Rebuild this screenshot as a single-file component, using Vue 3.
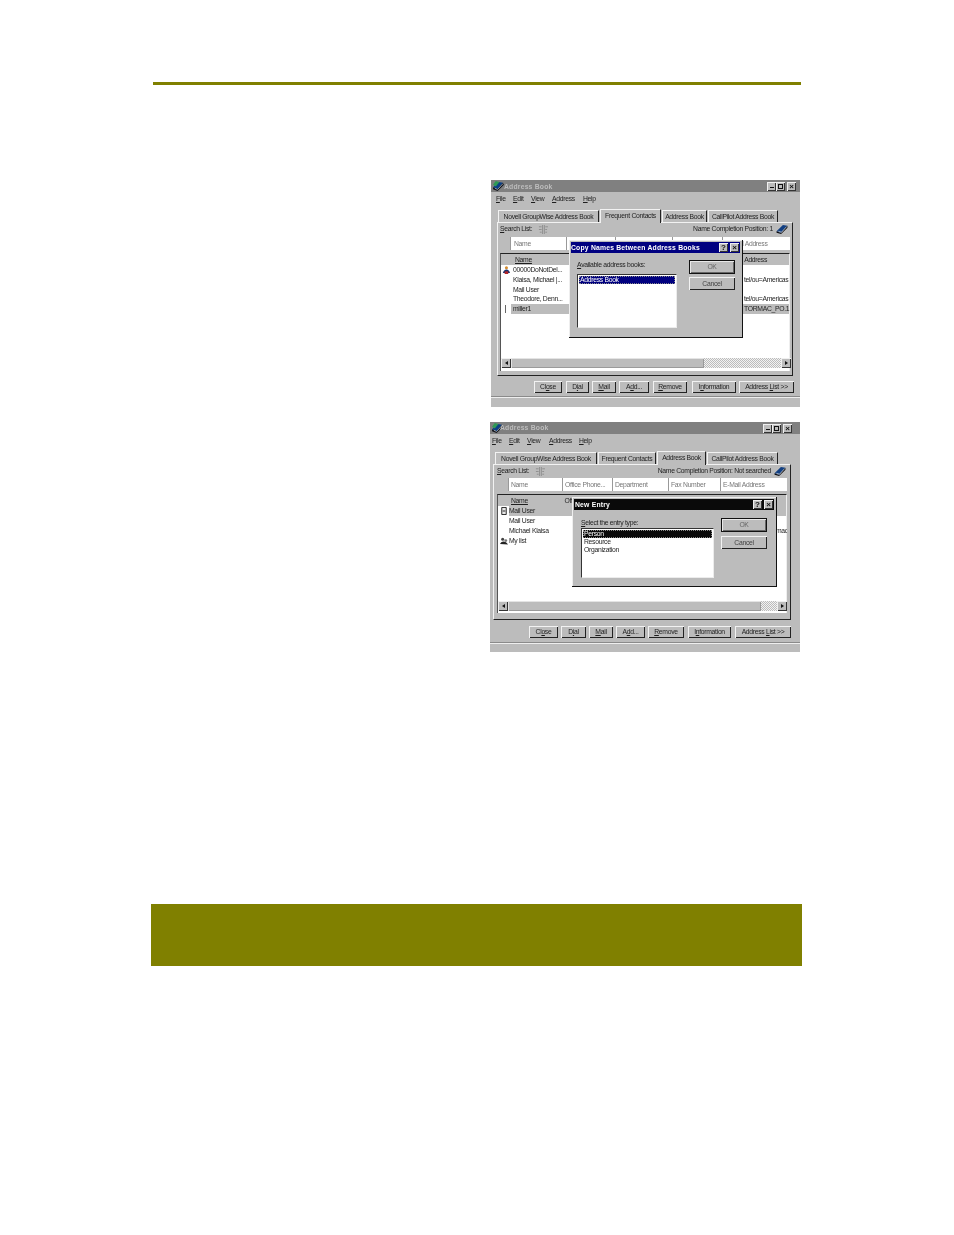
<script setup>
const menuBase = [
  ['', 'F', 'ile'],
  ['', 'E', 'dit'],
  ['', 'V', 'iew'],
  ['', 'A', 'ddress'],
  ['', 'H', 'elp']
]

const windows = [
  {
    id: 'first',
    titleInset: 11,
    menu: menuBase,
    menuSlots: [17, 18, 21, 31, 20],
    tabs: [
      { label: 'Novell GroupWise Address Book', width: 101 },
      { label: 'Frequent Contacts', width: 61, active: true },
      { label: 'Address Book', width: 45 },
      { label: 'CallPilot Address Book', width: 70 }
    ],
    search: 'Name Completion Position:  1',
    columns: [
      { label: 'Name', width: 56 },
      { label: 'Office Phone...', width: 49 },
      { label: 'Department', width: 57 },
      { label: 'Fax Number', width: 50 },
      { label: 'E-Mail Address', width: 68 }
    ],
    rows: [
      { name: '00000DoNotDel...', icon: 'person', right: '' },
      { name: 'Klaisa, Michael |...', right: 'tel/ou=Americas' },
      { name: 'Mail User', right: '' },
      { name: 'Theodore, Denn...', right: 'tel/ou=Americas' },
      { name: 'miller1', selected: true, right: 'TORMAC_PO.1', mark: true }
    ],
    thumb: 193,
    dither: 77,
    buttons: [
      { parts: ['Cl', 'o', 'se'], width: 28, gap: 43 },
      { parts: ['D', 'i', 'al'], width: 23, gap: 4 },
      { parts: ['', 'M', 'ail'], width: 24, gap: 3 },
      { parts: ['A', 'd', 'd...'], width: 30, gap: 3 },
      { parts: ['', 'R', 'emove'], width: 34, gap: 4 },
      { parts: ['I', 'n', 'formation'], width: 44, gap: 5 },
      { parts: ['Address ', 'L', 'ist >>'], width: 55, gap: 3 }
    ],
    dialog: {
      title: 'Copy Names Between Address Books',
      label: ['', 'A', 'vailable address books:'],
      items: ['Address Book']
    }
  },
  {
    id: 'second',
    titleInset: 8,
    menu: menuBase,
    menuSlots: [17, 18, 22, 30, 20],
    tabs: [
      { label: 'Novell GroupWise Address Book', width: 102 },
      { label: 'Frequent Contacts', width: 58 },
      { label: 'Address Book', width: 49, active: true },
      { label: 'CallPilot Address Book', width: 71 }
    ],
    search: 'Name Completion Position:  Not searched',
    columns: [
      { label: 'Name', width: 54 },
      { label: 'Office Phone...', width: 50 },
      { label: 'Department', width: 56 },
      { label: 'Fax Number', width: 52 },
      { label: 'E-Mail Address', width: 67 }
    ],
    rows: [
      { name: 'Mail User', icon: 'page', selected: true, right: '' },
      { name: 'Mail User', right: '' },
      { name: 'Michael Klaisa', right: 'mac' },
      { name: 'My list', icon: 'group', right: '' }
    ],
    thumb: 253,
    dither: 16,
    buttons: [
      { parts: ['Cl', 'o', 'se'], width: 29, gap: 39 },
      { parts: ['D', 'i', 'al'], width: 25, gap: 3 },
      { parts: ['', 'M', 'ail'], width: 24, gap: 3 },
      { parts: ['A', 'd', 'd...'], width: 29, gap: 3 },
      { parts: ['', 'R', 'emove'], width: 36, gap: 3 },
      { parts: ['I', 'n', 'formation'], width: 43, gap: 4 },
      { parts: ['Address ', 'L', 'ist >>'], width: 56, gap: 4 }
    ],
    dialog: {
      title: 'New Entry',
      label: ['', 'S', 'elect the entry type:'],
      items: ['Person', 'Resource', 'Organization']
    }
  }
]
</script>

<template>
  <main class="page">
    <div class="rule"></div>

    <section class="shots">
      <article v-for="win in windows" :key="win.id" class="window" :class="win.id">
        <header class="titlebar">
          <svg class="app-icon" viewBox="0 0 12 11">
            <path d="M0 7 L6 1 L11 2 L5 9 Z" fill="#0b3f86" />
            <path d="M0 7 L5 9 L11 2 L12 4 L5 11 L0 9 Z" fill="#10131a" />
            <path d="M0 4 L3 0 L7 1 L3 6 Z" fill="#2e9a55" />
            <path d="M2 8 L5 9.3 L11 3" stroke="#e8e8e8" stroke-width=".6" fill="none" />
          </svg>
          <span class="title-text" :style="{ marginLeft: win.titleInset - 11 + 'px' }">Address Book</span>
          <div class="controls">
            <span class="ctl"><i class="glyph-min"></i></span>
            <span class="ctl"><i class="glyph-max"></i></span>
            <span class="ctl ctl-close">×</span>
          </div>
        </header>

        <nav class="menu">
          <span v-for="(m, i) in win.menu" :key="i" :style="{ width: win.menuSlots[i] + 'px' }">{{ m[0] }}<u>{{ m[1] }}</u>{{ m[2] }}</span>
        </nav>

        <div class="tabs">
          <span
            v-for="tab in win.tabs"
            :key="tab.label"
            class="tab"
            :class="{ active: tab.active }"
            :style="{ width: tab.width + 'px' }"
          >{{ tab.label }}</span>
        </div>

        <div class="panel">
          <div class="search-row">
            <span><u>S</u>earch List:</span>
            <svg class="filter-icon" viewBox="0 0 11 10">
              <path d="M5 0 V10 M7 0 V10 M1 2 H4 M1 5 H4 M2 8 H4 M8 2 H11 M8 5 H10 M8 8 H10" stroke="#8c8c8c" stroke-width="1" fill="none" />
            </svg>
            <span class="search-status">{{ win.search }}</span>
            <svg class="book-icon" viewBox="0 0 14 11">
              <path d="M1 8 L8 1 L13 2 L6 10 Z" fill="#123f82" />
              <path d="M1 8 L6 10 L13 2 L13 4 L6 11 L1 9.5 Z" fill="#0c0c10" />
              <path d="M3 8 L6.5 9 L12 3" stroke="#e8e8e8" stroke-width=".7" fill="none" />
            </svg>
          </div>

          <div class="filters">
            <span class="lead"></span>
            <span v-for="c in win.columns" :key="c.label" class="filter-cell" :style="{ width: c.width + 'px' }">{{ c.label }}</span>
          </div>

          <div class="list">
            <div class="list-head">
              <span class="lead"></span>
              <span
                v-for="(c, i) in win.columns"
                :key="c.label"
                class="head-cell"
                :class="{ named: i === 0 }"
                :style="{ width: c.width + 'px' }"
              >{{ c.label }}</span>
            </div>

            <div class="rows">
              <div v-for="(r, i) in win.rows" :key="i" class="row">
                <span class="lead row-icon">
                  <svg v-if="r.icon === 'person'" viewBox="0 0 9 9">
                    <circle cx="5" cy="2" r="1.7" fill="#d38a2c" />
                    <path d="M1 8 Q2 4 5 4 Q8 4 9 8 Z" fill="#16306f" />
                    <path d="M3 6 H7 V9 H3 Z" fill="#b3262a" />
                  </svg>
                  <svg v-else-if="r.icon === 'page'" viewBox="0 0 9 9">
                    <path d="M2 .5 H7 V8.5 H2 Z" fill="#e8e8e8" stroke="#111" />
                    <path d="M3 4.5 H6" stroke="#111" />
                  </svg>
                  <svg v-else-if="r.icon === 'group'" viewBox="0 0 9 9">
                    <circle cx="3" cy="2.5" r="1.7" fill="#444" />
                    <circle cx="6.5" cy="4" r="1.6" fill="#777" />
                    <path d="M0 8 Q1 5 3.5 5 Q7 5 9 8.5 Z" fill="#222" />
                  </svg>
                  <i v-else-if="r.mark" class="row-mark"></i>
                </span>
                <div class="row-body" :class="{ selected: r.selected }">
                  <span class="row-name">{{ r.name }}</span>
                  <span v-if="r.right" class="row-right">{{ r.right }}</span>
                </div>
              </div>
            </div>

            <div class="scrollbar">
              <span class="sb-btn"><i class="arrow-left"></i></span>
              <span class="sb-thumb" :style="{ width: win.thumb + 'px' }"></span>
              <span class="sb-track" :style="{ width: win.dither + 'px' }"></span>
              <span class="sb-btn"><i class="arrow-right"></i></span>
            </div>
          </div>
        </div>

        <div class="actions">
          <span
            v-for="b in win.buttons"
            :key="b.parts.join('')"
            class="btn"
            :style="{ width: b.width + 'px', marginLeft: b.gap + 'px' }"
          >{{ b.parts[0] }}<u>{{ b.parts[1] }}</u>{{ b.parts[2] }}</span>
        </div>

        <div class="groove"></div>

        <aside class="dialog">
          <div class="dialog-title">
            <span>{{ win.dialog.title }}</span>
            <div class="dialog-controls">
              <span class="ctl">?</span>
              <span class="ctl ctl-close">×</span>
            </div>
          </div>
          <div class="dialog-body">
            <div class="dialog-left">
              <label class="dialog-label">{{ win.dialog.label[0] }}<u>{{ win.dialog.label[1] }}</u>{{ win.dialog.label[2] }}</label>
              <div class="listbox">
                <div v-for="(item, i) in win.dialog.items" :key="item" class="option" :class="{ picked: i === 0 }">{{ item }}</div>
              </div>
            </div>
            <div class="dialog-right">
              <span class="dlg-btn default">OK</span>
              <span class="dlg-btn">Cancel</span>
            </div>
          </div>
        </aside>
      </article>
    </section>

    <div class="band"></div>
  </main>
</template>

<style scoped>
.page {
  width: 954px;
  height: 1235px;
  padding-top: 82px;
  box-sizing: border-box;
  background: #fff;
  overflow: hidden;
  font-family: "Liberation Sans", Arial, sans-serif;
}
.rule {
  width: 648px;
  height: 3px;
  margin-left: 153px;
  background: #808000;
}
.shots {
  display: flex;
  flex-direction: column;
  gap: 15px;
  margin-top: 95px;
}
.band {
  width: 651px;
  height: 62px;
  margin: 252px 0 0 151px;
  background: #808000;
}

.window {
  position: relative;
  display: flex;
  flex-direction: column;
  background: #bcbcbc;
  font-size: 6.8px;
  letter-spacing: -0.3px;
  line-height: 10px;
  color: #1e1e1e;
  white-space: nowrap;
  filter: blur(0.4px);
}
.first { width: 309px; height: 227px; margin-left: 491px; }
.second { width: 310px; height: 230px; margin-left: 490px; }

u { text-decoration-thickness: 0.6px; text-underline-offset: 1px; }

.titlebar {
  display: flex;
  align-items: center;
  height: 12px;
  padding: 0 3px 0 2px;
  background: #808080;
  color: #bdbdbd;
  font-weight: 700;
  letter-spacing: 0.2px;
}
.first .title-text { padding-top: 1px; }
.app-icon { width: 11px; height: 10px; flex: none; }
.controls { display: flex; margin-left: auto; }
.first .controls { margin-right: 1px; }
.second .controls { margin-right: 5px; }
.ctl {
  display: flex;
  align-items: center;
  justify-content: center;
  width: 9px;
  height: 9px;
  background: #bcbcbc;
  color: #111;
  font-size: 8px;
  font-weight: 700;
  line-height: 9px;
  letter-spacing: 0;
  box-shadow: inset 1px 1px 0 #efefef, inset -1px -1px 0 #333;
}
.ctl-close { margin-left: 2px; }
.glyph-min { width: 4px; height: 1px; margin-top: 3px; background: #111; }
.glyph-max { width: 5px; height: 5px; border: 1px solid #111; box-sizing: border-box; }

.menu { display: flex; height: 11px; margin-top: 1px; }
.menu span { line-height: 11px; flex: none; }
.first .menu { padding-left: 5px; }
.second .menu { padding-left: 2px; }

.tabs { display: flex; align-items: flex-end; height: 13px; margin-top: 5px; gap: 1px; }
.first .tabs { padding-left: 7px; }
.second .tabs { padding-left: 5px; }
.tab {
  box-sizing: border-box;
  height: 12px;
  text-align: center;
  line-height: 12px;
  overflow: hidden;
  border-top: 1px solid #f2f2f2;
  border-left: 1px solid #f2f2f2;
  border-right: 1px solid #222;
}
.tab.active { height: 14px; margin-bottom: -1px; position: relative; z-index: 2; background: #bcbcbc; line-height: 11px; }

.panel {
  box-sizing: border-box;
  display: flex;
  flex-direction: column;
  border-top: 1px solid #f2f2f2;
  border-left: 1px solid #f2f2f2;
  border-right: 1px solid #222;
  border-bottom: 1px solid #222;
}
.first .panel { width: 296px; height: 154px; margin-left: 6px; padding: 1px 2px 4px 2px; }
.second .panel { width: 298px; height: 156px; margin-left: 3px; padding: 1px 3px 6px 3px; }

.search-row { display: flex; align-items: center; height: 10px; }
.first .search-row { margin-bottom: 1px; }
.filter-icon { width: 10px; height: 9px; margin-left: 6px; flex: none; }
.search-status { margin-left: auto; }
.book-icon { width: 14px; height: 10px; margin: 0 1px 0 2px; flex: none; }
.second .book-icon { margin-right: 0; }

.lead { display: block; flex: none; }
.first .lead { width: 10px; }
.second .lead { width: 11px; }

.filters { display: flex; height: 13px; margin-top: 2px; width: 290px; }
.filter-cell {
  box-sizing: border-box;
  background: #fff;
  color: #777;
  line-height: 13px;
  overflow: hidden;
  border-left: 1px solid #999;
}
.first .filter-cell { padding-left: 3px; }
.second .filter-cell { padding-left: 2px; }

.list {
  flex: 1;
  display: flex;
  flex-direction: column;
  width: 290px;
  margin-top: 3px;
  background: #fff;
  box-sizing: border-box;
  border-top: 1px solid #222;
  border-left: 1px solid #555;
  border-right: 1px solid #eee;
}
.list-head { display: flex; background: #bcbcbc; height: 11px; }
.head-cell { box-sizing: border-box; line-height: 11px; overflow: hidden; }
.first .head-cell { padding-left: 4px; }
.second .head-cell { padding-left: 2px; }
.named { text-decoration: underline; text-decoration-thickness: 0.6px; text-underline-offset: 1px; }

.rows { flex: 1; }
.row { display: flex; align-items: stretch; }
.first .row { height: 9.75px; }
.second .row { height: 10px; }
.row-icon { display: flex; align-items: center; justify-content: center; }
.row-icon svg { width: 8px; height: 8px; }
.row-mark { width: 2px; height: 8px; border-left: 1px solid #666; }
.row-body { position: relative; flex: 1; display: flex; padding-left: 0; line-height: 10px; }
.first .row-body { padding-left: 2px; }
.row-body.selected { background: #bcbcbc; }
.row-right { position: absolute; top: 0; overflow: hidden; }
.first .row-right { left: 233px; width: 46px; }
.second .row-right { left: 267px; width: 11px; }

.scrollbar { display: flex; height: 10px; margin: 0 0 2px; background: #bcbcbc; }
.first .scrollbar { margin-bottom: 3px; }
.sb-btn {
  display: flex;
  align-items: center;
  justify-content: center;
  flex: none;
  width: 10px;
  background: #bcbcbc;
  box-shadow: inset 1px 1px 0 #efefef, inset -1px -1px 0 #333;
}
.sb-thumb { flex: none; box-shadow: inset 1px 1px 0 #e4e4e4, inset -1px -1px 0 #9a9a9a; background: #bcbcbc; }
.sb-track { flex: none; background: repeating-conic-gradient(#f2f2f2 0 25%, #bcbcbc 0 50%) 0 0 / 2px 2px; }
.arrow-left { border: 2.5px solid transparent; border-left: 0; border-right: 3px solid #111; }
.arrow-right { border: 2.5px solid transparent; border-right: 0; border-left: 3px solid #111; }

.actions { display: flex; height: 12px; }
.first .actions { margin-top: 5px; }
.second .actions { margin-top: 6px; }
.btn {
  box-sizing: border-box;
  flex: none;
  height: 12px;
  text-align: center;
  line-height: 12px;
  overflow: hidden;
  box-shadow: inset 1px 1px 0 #f2f2f2, inset -1px -1px 0 #222;
}

.groove { height: 1px; border-top: 1px solid #8a8a8a; background: #eee; }
.first .groove { margin-top: 3px; }
.second .groove { margin-top: 4px; }

.dialog {
  position: absolute;
  box-sizing: border-box;
  display: flex;
  flex-direction: column;
  background: #bcbcbc;
  border-right: 1px solid #111;
  border-bottom: 1px solid #111;
  box-shadow: inset 1px 1px 0 #eee;
}
.first .dialog { left: 78px; top: 60px; width: 174px; height: 98px; padding: 2px 2px 0 2px; }
.second .dialog { left: 82px; top: 75px; width: 205px; height: 90px; padding: 2px 2px 0 2px; }

.dialog-title {
  display: flex;
  align-items: center;
  height: 11px;
  padding: 0 1px 0 0;
  color: #fff;
  font-weight: 700;
  letter-spacing: 0.2px;
  flex: none;
}
.first .dialog-title { background: #000080; }
.second .dialog-title { background: #0a0a0a; padding-left: 1px; }
.dialog-controls { display: flex; margin-left: auto; }

.dialog-body { flex: 1; display: flex; }
.first .dialog-body { padding: 6px 5px 0 6px; }
.second .dialog-body { padding: 7px 7px 0 7px; }
.dialog-left { display: flex; flex-direction: column; }
.dialog-label { line-height: 10px; height: 10px; margin-top: 1px; }
.first .dialog-label { margin-bottom: 4px; }

.listbox {
  box-sizing: border-box;
  background: #fff;
  border-top: 1px solid #333;
  border-left: 1px solid #333;
  border-right: 1px solid #ececec;
  border-bottom: 1px solid #ececec;
  padding: 1px;
}
.first .listbox { width: 100px; height: 54px; }
.second .listbox { width: 133px; height: 50px; }
.option { height: 8px; line-height: 8px; padding-left: 1px; }
.option.picked { color: #fff; outline: 1px dotted #888; outline-offset: -1px; }
.first .option.picked { background: #000080; }
.second .option.picked { background: #0a0a0a; }

.dialog-right { display: flex; flex-direction: column; margin-left: auto; }
.first .dialog-right { gap: 3px; margin-top: 1px; }
.second .dialog-right { gap: 4px; margin-top: 1px; }
.dlg-btn {
  box-sizing: border-box;
  display: block;
  width: 46px;
  height: 13px;
  text-align: center;
  line-height: 13px;
  color: #444;
  box-shadow: inset 1px 1px 0 #f2f2f2, inset -1px -1px 0 #222;
}
.dlg-btn.default { height: 14px; outline: 1px solid #111; outline-offset: -1px; box-shadow: inset 2px 2px 0 #e8e8e8, inset -2px -2px 0 #666; color: #666; }
</style>
